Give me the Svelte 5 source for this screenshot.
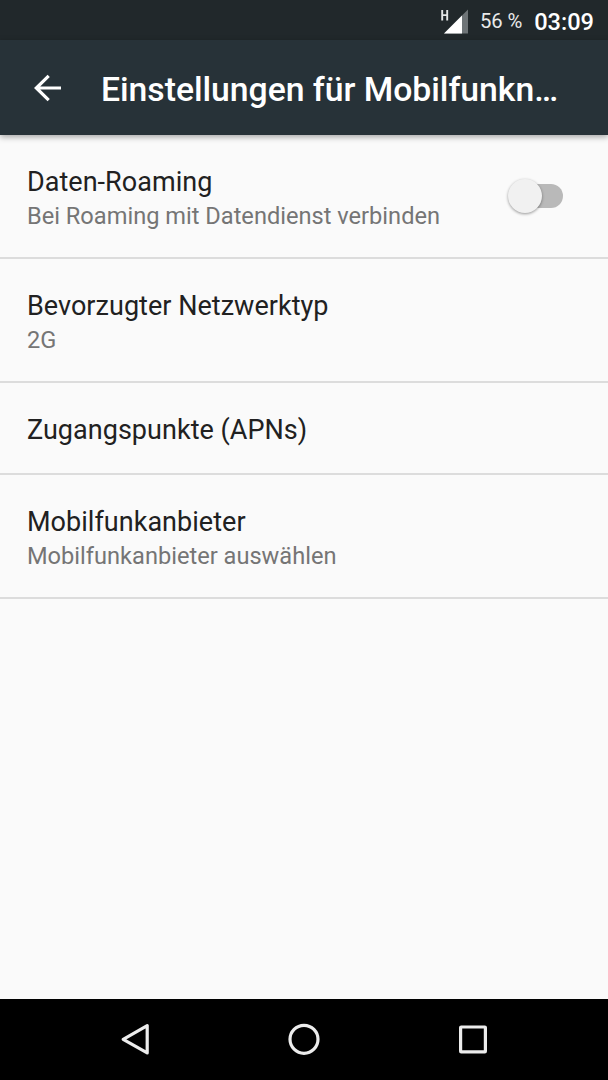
<script>
  let roaming = false;

  const items = [
    {
      title: "Daten-Roaming",
      summary: "Bei Roaming mit Datendienst verbinden",
      toggle: true
    },
    { title: "Bevorzugter Netzwerktyp", summary: "2G" },
    { title: "Zugangspunkte (APNs)" },
    { title: "Mobilfunkanbieter", summary: "Mobilfunkanbieter auswählen" }
  ];

  function toggleRoaming() {
    roaming = !roaming;
  }
</script>

<div class="screen">
  <div class="status">
    <svg class="signal" width="30" height="30" viewBox="0 0 30 30">
      <path d="M28 1.5V25.5H4Z" fill="#6e7477" />
      <path d="M22 7.5V25.5H4Z" fill="#fff" />
      <path d="M2.2 2V12.5M7.2 2V12.5M2.2 7.1H7.2" stroke="#e4e6e7" stroke-width="1.9" fill="none" />
    </svg>
    <span class="battery">56 %</span>
    <span class="clock">03:09</span>
  </div>

  <header>
    <button class="back" aria-label="Nach oben">
      <svg width="28" height="28" viewBox="0 0 28 28">
        <path d="M27 14H2.5M14.7 1.8L2.3 14L14.7 26.2" fill="none" stroke="#fff" stroke-width="3.2" />
      </svg>
    </button>
    <h1>Einstellungen für Mobilfunkn…</h1>
  </header>

  <main>
    {#each items as item}
      <div class="item" class:single={!item.summary}>
        <div class="text">
          <div class="title">{item.title}</div>
          {#if item.summary}
            <div class="summary">{item.summary}</div>
          {/if}
        </div>
        {#if item.toggle}
          <button
            class="switch"
            class:on={roaming}
            role="switch"
            aria-checked={roaming}
            aria-label={item.title}
            on:click={toggleRoaming}
          >
            <span class="thumb"></span>
          </button>
        {/if}
      </div>
    {/each}
  </main>

  <nav>
    <svg width="34" height="34" viewBox="0 0 34 34">
      <path d="M29.2 3.6V30.9L5.2 17.3Z" />
    </svg>
    <svg width="34" height="34" viewBox="0 0 34 34">
      <circle cx="17" cy="17.3" r="14" />
    </svg>
    <svg width="34" height="34" viewBox="0 0 34 34">
      <rect x="4.6" y="5" width="24.8" height="24.8" rx="0.6" />
    </svg>
  </nav>
</div>

<style>
  :global(body) {
    margin: 0;
    background: #fafafa;
  }

  .screen {
    display: flex;
    flex-direction: column;
    height: 1080px;
    overflow: hidden;
    background: #fafafa;
    font-family: Roboto, "Noto Sans", sans-serif;
  }

  button {
    padding: 0;
    border: 0;
    background: none;
  }

  svg {
    display: block;
  }

  .status {
    display: flex;
    align-items: center;
    justify-content: flex-end;
    box-sizing: border-box;
    height: 40px;
    padding-right: 14px;
    background: #21282b;
    color: #fff;
    line-height: 40px;
  }

  .signal {
    margin-top: 5px;
    margin-right: 10px;
  }

  .battery {
    margin-right: 12px;
    padding-top: 1px;
    color: #e9eaea;
    font-size: 20.25px;
    letter-spacing: -0.1px;
  }

  .clock {
    padding-top: 4px;
    font-size: 23.6px;
    font-weight: 500;
  }

  header {
    display: flex;
    align-items: center;
    box-sizing: border-box;
    height: 95px;
    padding: 0 34px 0 33.5px;
    background: #273238;
    box-shadow: 0 2px 6px rgba(0, 0, 0, 0.35);
    z-index: 1;
  }

  .back {
    width: 28px;
    margin-right: 39.5px;
  }

  h1 {
    flex: 1;
    margin: 0;
    padding-top: 5px;
    color: #fff;
    font-size: 33.75px;
    font-weight: 500;
    letter-spacing: -0.03px;
    line-height: 44px;
    white-space: nowrap;
  }

  main {
    flex: 1;
  }

  .item {
    display: flex;
    align-items: center;
    justify-content: space-between;
    box-sizing: border-box;
    height: 124px;
    padding: 0 45px 0 27px;
    border-bottom: 2px solid #dcdcdc;
  }

  .item.single {
    height: 92px;
  }

  .text {
    padding-top: 6px;
  }

  .single .text {
    padding-top: 4px;
  }

  .title {
    color: #212121;
    font-size: 27px;
    letter-spacing: 0.03px;
    line-height: 34px;
  }

  .summary {
    color: #757575;
    font-size: 23.625px;
    line-height: 34px;
  }

  .switch {
    display: flex;
    align-items: center;
    width: 52px;
    height: 24px;
    border-radius: 12px;
    background: #b9b9b9;
  }

  .thumb {
    width: 34px;
    height: 34px;
    margin-left: -3px;
    border-radius: 50%;
    background: #f1f1f1;
    box-shadow: 0 1px 3px rgba(0, 0, 0, 0.4);
  }

  .on {
    justify-content: flex-end;
    background: #80cbc4;
  }

  nav {
    display: flex;
    align-items: center;
    justify-content: center;
    gap: 135px;
    box-sizing: border-box;
    height: 81px;
    padding-bottom: 1px;
    background: #000;
  }

  nav svg {
    fill: none;
    stroke: #ececec;
    stroke-width: 3.2;
    stroke-linejoin: round;
  }
</style>
